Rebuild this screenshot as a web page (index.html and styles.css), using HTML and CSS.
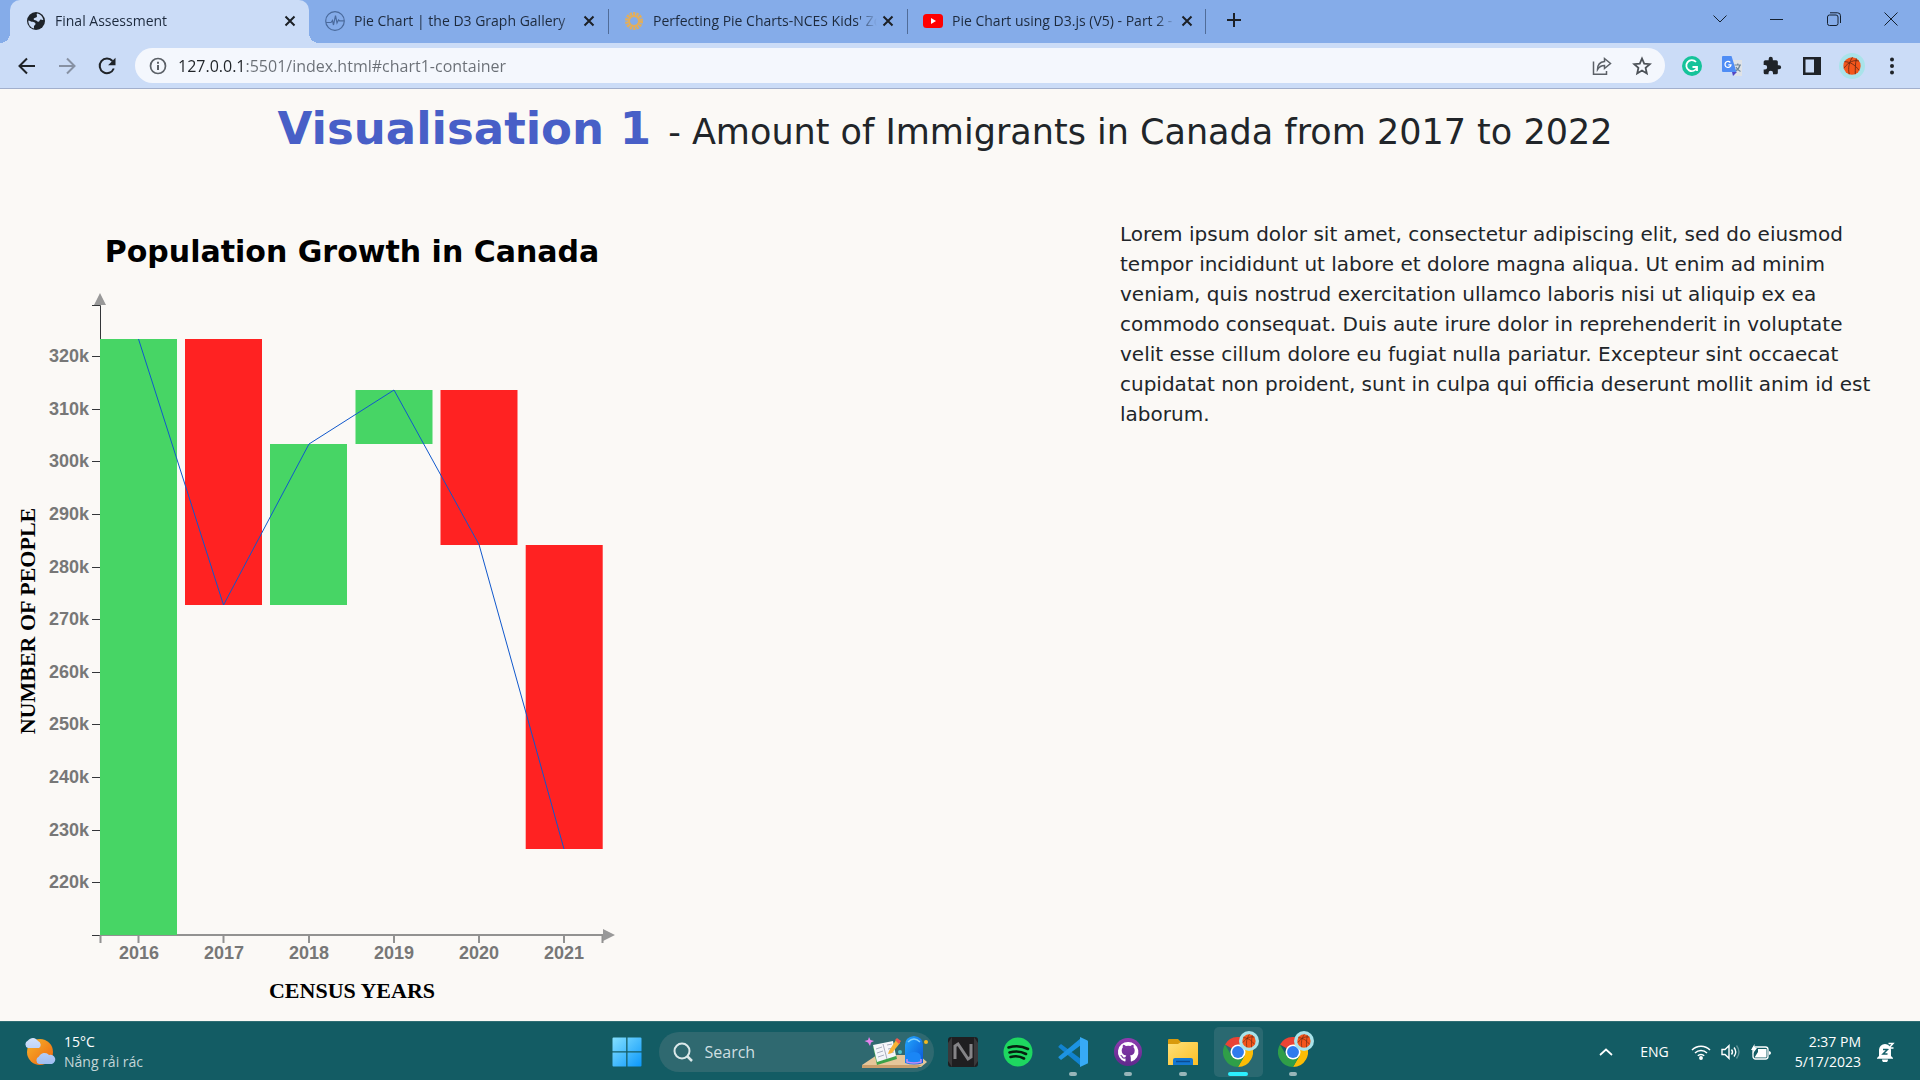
FILE: index.html
```
<!DOCTYPE html>
<html lang="en">
<head>
<meta charset="utf-8">
<title>Final Assessment</title>
<link rel="stylesheet" href="styles.css">
</head>
<body>
<svg class="defs" aria-hidden="true">
  <defs>
    <linearGradient id="sun" x1="0" y1="0" x2="1" y2="1"><stop offset="0" stop-color="#f5b52c"/><stop offset="1" stop-color="#f0640f"/></linearGradient>
    <linearGradient id="cloud" x1="0" y1="0" x2="0" y2="1"><stop offset="0" stop-color="#d3e2fb"/><stop offset="1" stop-color="#9fbdf2"/></linearGradient>
    <linearGradient id="win" x1="0" y1="0" x2="1" y2="1"><stop offset="0" stop-color="#84e0ff"/><stop offset="1" stop-color="#0b98fb"/></linearGradient>
    <linearGradient id="folder" x1="0" y1="0" x2="1" y2="1"><stop offset="0" stop-color="#ffe07a"/><stop offset="1" stop-color="#fdbf24"/></linearGradient>
    <linearGradient id="github" x1="0" y1="0" x2="0" y2="1"><stop offset="0" stop-color="#8f3bb0"/><stop offset="1" stop-color="#5f2a8c"/></linearGradient>
    <linearGradient id="bag" x1="0" y1="0" x2="1" y2="1"><stop offset="0" stop-color="#22a8ff"/><stop offset="1" stop-color="#0b55d8"/></linearGradient>
    <symbol id="close" viewBox="0 0 12 12"><path d="M1.5 1.5l9 9M10.5 1.5l-9 9" fill="none" stroke="#1c2026" stroke-width="2"/></symbol>
    <symbol id="ball" viewBox="0 0 24 24">
      <circle cx="12" cy="12" r="12" fill="#a9e3ea"/>
      <circle cx="12" cy="12" r="8" fill="#f4561b"/>
      <path d="M5 8c5 0 10 3 13.500 8M4.500 14C9 8 14 6 18.500 7.500M12.500 4c-3 4-4.500 10-3 15.500M16 5c-1 5-1 10-1 14.500" fill="none" stroke="#6b2a14" stroke-width=".8"/>
    </symbol>
    <symbol id="chrome" viewBox="0 0 48 48">
      <path d="M24 24L3.200 12A24 24 0 0 1 44.800 12z" fill="#ea4335"/>
      <path d="M24 12h20.800A24 24 0 0 1 24 48L34.400 30z" fill="#fbbc05"/>
      <path d="M3.200 12A24 24 0 0 0 24 48l10.400-18-10.400 4-10.400-4z" fill="#2f9e48"/>
      <circle cx="24" cy="24" r="12" fill="#fff"/>
      <circle cx="24" cy="24" r="9.500" fill="#2f7bee"/>
    </symbol>
  </defs>
</svg>

<header class="browser">
  <div class="tabstrip">
    <nav class="tabs" aria-label="Tabs">
      <div class="tab tab-active">
        <svg class="tab-icon" viewBox="0 0 20 20"><circle cx="10" cy="10" r="9" fill="#1e2329"/><path d="M11 2.500c3.500.5 6 3.500 6.300 6.500-1 .5-2-.8-3-.3s-.6 2-2 2-1.500-1.200-3-1.400S7 8 8.200 7.300 11 6.800 11 5.300s-.8-1.600 0-2.800zM2.300 9.500c1.500 0 2.200 1.200 3.500 1.300s3.500.3 3.700 1.800-1.200 1.600-1.500 2.700.4 1.600-.3 2.200C4.500 16.500 2.300 13.500 2.300 9.500z" fill="#cbdcf7"/></svg>
        <a class="tab-title" href="#chart1-container">Final Assessment</a>
        <button class="tab-close" aria-label="Close tab"><svg width="12" height="12"><use href="#close"/></svg></button>
      </div>
      <div class="tab">
        <svg class="tab-icon" viewBox="0 0 20 20" fill="none" stroke="#4a6a9c" stroke-width="1.200"><circle cx="10" cy="10" r="9.300"/><path d="M1 11.500h5l1.500-2 1 4.500 2-9.500 1.500 7.500 1.500-3 1 .8H19"/></svg>
        <a class="tab-title" href="#graph-gallery">Pie Chart | the D3 Graph Gallery</a>
        <button class="tab-close" aria-label="Close tab"><svg width="12" height="12"><use href="#close"/></svg></button>
      </div>
      <div class="tab">
        <svg class="tab-icon" viewBox="0 0 20 20"><circle cx="10" cy="10" r="6.500" fill="none" stroke="#e2ae5c" stroke-width="5" stroke-dasharray="2 .9"/><circle cx="10" cy="10" r="5" fill="none" stroke="#e2ae5c" stroke-width="2"/></svg>
        <a class="tab-title" href="#nces">Perfecting Pie Charts-NCES Kids' Zone</a>
        <button class="tab-close" aria-label="Close tab"><svg width="12" height="12"><use href="#close"/></svg></button>
      </div>
      <div class="tab">
        <svg class="tab-icon" viewBox="0 0 20 20"><rect y="3" width="20" height="14" rx="3.500" fill="#f00"/><path d="M8 7l5 3-5 3z" fill="#fff"/></svg>
        <a class="tab-title" href="#video">Pie Chart using D3.js (V5) - Part 2 - YouTube</a>
        <button class="tab-close" aria-label="Close tab"><svg width="12" height="12"><use href="#close"/></svg></button>
      </div>
      <button class="new-tab" aria-label="New tab"><svg width="16" height="16" viewBox="0 0 16 16"><path d="M8 1v14M1 8h14" stroke="#1c2026" stroke-width="2"/></svg></button>
    </nav>
    <div class="window-controls">
      <button aria-label="Search tabs"><svg width="14" height="14" viewBox="0 0 14 14"><path d="M.5 3.500L7 10l6.500-6.500"/></svg></button>
      <button aria-label="Minimise"><svg width="14" height="14" viewBox="0 0 14 14"><path d="M0 7.500h13"/></svg></button>
      <button aria-label="Restore"><svg width="14" height="14" viewBox="0 0 14 14"><rect x=".5" y="3" width="10.500" height="10.500" rx="2"/><path d="M3 .8h7.500a3 3 0 0 1 3 3V11"/></svg></button>
      <button aria-label="Close"><svg width="14" height="14" viewBox="0 0 14 14"><path d="M.5.5l13 13M13.500.5l-13 13"/></svg></button>
    </div>
  </div>
  <div class="toolbar">
    <button class="tool" aria-label="Back"><svg width="18" height="18" viewBox="0 0 18 18" fill="none" stroke="#1f2328" stroke-width="2"><path d="M17 9H2M9 1.500L1.500 9 9 16.500"/></svg></button>
    <button class="tool" aria-label="Forward"><svg width="18" height="18" viewBox="0 0 18 18" fill="none" stroke="#8791a3" stroke-width="2"><path d="M1 9h15M9 1.500L16.500 9 9 16.500"/></svg></button>
    <button class="tool" aria-label="Reload"><svg width="18" height="18" viewBox="0 0 18 18"><path d="M15.800 11.500A7.300 7.300 0 1 1 14.500 4" fill="none" stroke="#1f2328" stroke-width="2"/><path d="M17.500.8v7.400h-7.400z" fill="#1f2328"/></svg></button>
    <form class="omnibox">
      <svg width="18" height="18" viewBox="0 0 18 18"><circle cx="9" cy="9" r="7.500" fill="none" stroke="#5b6067" stroke-width="1.700"/><path d="M9 8v5M9 4.700v2" stroke="#5b6067" stroke-width="2"/></svg>
      <input class="address" type="text" aria-label="Address" value="127.0.0.1:5501/index.html#chart1-container">
      <button class="tool" type="button" aria-label="Share"><svg width="20" height="20" viewBox="0 0 20 20" fill="none" stroke="#5b6067" stroke-width="1.500"><path d="M1.500 5.500v12.700h13V15"/><path d="M12.500 2.500l6 5-6 5v-3C9 9.500 7 11 5.500 13.500 5.500 9 8 6 12.500 5.500z"/></svg></button>
      <button class="tool" type="button" aria-label="Bookmark"><svg width="20" height="20" viewBox="0 0 20 20"><path d="M10 2.500l2.200 5.200 5.600.5-4.200 3.700 1.200 5.500L10 14.500l-4.800 2.900 1.200-5.500-4.200-3.700 5.600-.5z" fill="none" stroke="#4c5157" stroke-width="1.800"/></svg></button>
    </form>
    <button class="tool" aria-label="Grammar checker"><svg width="20" height="20" viewBox="0 0 20 20"><circle cx="10" cy="10" r="10" fill="#15c39a"/><path d="M14 6A5.500 5.500 0 1 0 15 11.500M10.500 11H15v4" fill="none" stroke="#fff" stroke-width="1.800"/></svg></button>
    <button class="tool" aria-label="Translate"><svg width="20" height="20" viewBox="0 0 20 20"><path d="M8 4h12v16H13z" fill="#dfe2e6"/><path d="M12.500 9h6.500M15.800 7.500V9M18 9c-.8 3-2.500 5-4.500 6M14 11c1 2 2.500 3.500 4.500 4.500" fill="none" stroke="#6e8799" stroke-width="1.200"/><path d="M10 16h5l-4 4z" fill="#5347c4"/><path d="M1 0h8.500l5 16H1a1 1 0 0 1-1-1V1a1 1 0 0 1 1-1z" fill="#4f8df5"/><path d="M8.300 6.500a3 3 0 1 0 .7 2.300H6.300" fill="none" stroke="#fff" stroke-width="1.300"/></svg></button>
    <button class="tool" aria-label="Extensions"><svg width="20" height="20" viewBox="0 0 24 24"><path d="M20.500 11H19V7a2 2 0 0 0-2-2h-4V3.500a2.500 2.500 0 0 0-5 0V5H4a2 2 0 0 0-2 2v3.800h1.500a2.700 2.700 0 0 1 0 5.400H2V20a2 2 0 0 0 2 2h3.800v-1.500a2.700 2.700 0 0 1 5.400 0V22H17a2 2 0 0 0 2-2v-4h1.500a2.500 2.500 0 0 0 0-5z" fill="#1f2328"/></svg></button>
    <button class="tool" aria-label="Side panel"><svg width="18" height="18" viewBox="0 0 18 18"><path d="M0 0h18v18H0zM2.500 2.500v13h8.500v-13z" fill="#1f2328" fill-rule="evenodd"/></svg></button>
    <button class="tool" aria-label="Profile"><svg width="26" height="26"><use href="#ball"/></svg></button>
    <button class="tool" aria-label="Menu"><svg width="4" height="18" viewBox="0 0 4 18" fill="#1f2328"><circle cx="2" cy="2.500" r="2"/><circle cx="2" cy="9" r="2"/><circle cx="2" cy="15.500" r="2"/></svg></button>
  </div>
</header>

<main class="page">
  <h1 class="heading"><strong>Visualisation 1</strong> - Amount of Immigrants in Canada from 2017 to 2022</h1>
  <section class="content" id="chart1-container">
    <svg class="chart" width="640" height="790" viewBox="0 0 640 790" role="img" aria-label="Population Growth in Canada">
      <text class="chart-title" x="352" y="43">Population Growth in Canada</text>
      <g class="axis-y">
        <path d="M92 86.500h8.500v630H92M92 137.500h8M92 190.500h8M92 242.500h8M92 295.500h8M92 348.500h8M92 400.500h8M92 453.500h8M92 505.500h8M92 558.500h8M92 611.500h8M92 663.500h8"/>
        <text x="89" y="143">320k</text><text x="89" y="196">310k</text><text x="89" y="248">300k</text><text x="89" y="301">290k</text><text x="89" y="354">280k</text><text x="89" y="406">270k</text><text x="89" y="459">260k</text><text x="89" y="511">250k</text><text x="89" y="564">240k</text><text x="89" y="617">230k</text><text x="89" y="669">220k</text>
      </g>
      <g class="axis-x">
        <path d="M138.500 716v8M223.500 716v8M309 716v8M394 716v8M479 716v8M564 716v8M100.500 716v8M602.500 716v8M100 716h503"/>
        <text x="139" y="740">2016</text><text x="224" y="740">2017</text><text x="309" y="740">2018</text><text x="394" y="740">2019</text><text x="479" y="740">2020</text><text x="564" y="740">2021</text>
      </g>
      <path class="arrow" d="M94 86l6-12 6 12zM603 710l12 6-12 6z"/>
      <rect class="up" x="100" y="120" width="77" height="596"/>
      <rect class="down" x="185" y="120" width="77" height="266"/>
      <rect class="up" x="270" y="225" width="77" height="161"/>
      <rect class="up" x="355.500" y="171" width="77" height="54"/>
      <rect class="down" x="440.500" y="171" width="77" height="155"/>
      <rect class="down" x="525.700" y="326" width="77" height="304"/>
      <polyline class="trend" points="138.500,120 223.500,386 309,225 394,171 479,325.500 564,630"/>
      <text class="axis-name" x="352" y="779">CENSUS YEARS</text>
      <text class="axis-name" transform="translate(35 402) rotate(-90)">NUMBER OF PEOPLE</text>
    </svg>
    <p class="description">Lorem ipsum dolor sit amet, consectetur adipiscing elit, sed do eiusmod tempor incididunt ut labore et dolore magna aliqua. Ut enim ad minim veniam, quis nostrud exercitation ullamco laboris nisi ut aliquip ex ea commodo consequat. Duis aute irure dolor in reprehenderit in voluptate velit esse cillum dolore eu fugiat nulla pariatur. Excepteur sint occaecat cupidatat non proident, sunt in culpa qui officia deserunt mollit anim id est laborum.</p>
  </section>
</main>

<footer class="taskbar">
  <button class="weather">
    <svg width="32" height="30" viewBox="0 0 32 30"><circle cx="16" cy="15" r="13" fill="url(#sun)"/><path d="M4 11a4 4 0 0 1 0-7.500A6 6 0 0 1 14 4a4 4 0 0 1 1 7zM15 27a4 4 0 0 1 0-7.500 6 6 0 0 1 10-1.500 4.500 4.500 0 0 1 3 9z" fill="url(#cloud)"/></svg>
    <span class="weather-text"><span>15°C</span><span class="weather-note">Nắng rải rác</span></span>
  </button>
  <div class="apps">
    <button class="app" aria-label="Start"><svg width="30" height="30" viewBox="0 0 30 30" fill="url(#win)"><path d="M1.500.5H14.200V14.200H.5V1.500a1 1 0 0 1 1-1zM15.500.5h13a1 1 0 0 1 1 1v12.700h-14zM.5 15.500h13.700v14H1.500a1 1 0 0 1-1-1zM15.500 15.500h14v13a1 1 0 0 1-1 1h-13z"/></svg></button>
    <form class="search">
      <svg width="20" height="20" viewBox="0 0 20 20" fill="none" stroke="#dbe8e9" stroke-width="2"><circle cx="9" cy="9" r="7.500"/><path d="M14 14l5 5" stroke-width="2.500"/></svg>
      <input type="search" aria-label="Search" placeholder="Search">
      <svg class="search-art" width="66" height="34" viewBox="0 0 66 34">
        <path d="M0 30l15-10h42l8 7-6 5H0z" fill="#e5c69a"/><path d="M0 30h60l-5 3H0z" fill="#c99e6b"/>
        <path d="M7 2l1.500 3L12 6l-3 1.500L8 11 6 7.500 2.500 6 6 5z" fill="#e683ee"/>
        <path d="M11 12l20-5 4 17-20 6z" fill="#3ba24a"/><path d="M11 10l20-4 3 15-19 6z" fill="#f4f5fa"/><path d="M21 9l4 15M14 14l6-2M15 18l6-2M16 22l6-2M25 10l5-1M26 14l5-1M27 18l5-1" stroke="#a9aec0" stroke-width="1"/>
        <path d="M27 16l7-11 4 3-8 10-4 1z" fill="#f7b235"/><path d="M33 5l2-2 4 3-2 3z" fill="#ee5b4e"/>
        <circle cx="38" cy="17" r="2" fill="#4fc3c8"/><circle cx="64" cy="7" r="2" fill="#f5b81f"/>
        <path d="M43 28V10q0-8 9-9 9 1 9 9v18q-9 3-18 0z" fill="url(#bag)"/><path d="M46 7q6-6 12 0" fill="none" stroke="#7fd0ff" stroke-width="1.500"/><path d="M45 28v-5q0-6 7-6t7 6v5z" fill="#1a86f6"/><path d="M45 24v3q7 2 14 0v-3" fill="none" stroke="#c58cf5" stroke-width="1.500"/>
      </svg>
    </form>
    <button class="app" aria-label="Notes"><svg width="30" height="30" viewBox="0 0 30 30"><rect width="30" height="30" rx="3" fill="#1f1e20"/><path d="M0 6l4-6v30l-4-6zM30 6l-4-6v30l4-6z" fill="#3a393b"/><path d="M7 22V9l3-2 10 15 3-2V7" fill="none" stroke="#858487" stroke-width="3"/></svg></button>
    <button class="app" aria-label="Music"><svg width="30" height="30" viewBox="0 0 30 30"><circle cx="15" cy="15" r="14.500" fill="#1ed760"/><path d="M5.500 10.500c7-2 14-1.300 19.500 1.500M6.500 15.500c6-1.700 12-1 16.500 1.500M7.500 20c5-1.300 9.500-.8 13.500 1.500" fill="none" stroke="#06200f" stroke-width="2.600" stroke-linecap="round"/></svg></button>
    <button class="app app-open" aria-label="Code editor"><svg width="30" height="30" viewBox="0 0 30 30"><path d="M3 7l20 15v7L.8 10.500a1 1 0 0 1 0-1.500z" fill="#1283d0"/><path d="M3 23L23 8V1L.8 19.500a1 1 0 0 0 0 1.500z" fill="#1d93e2"/><path d="M22 0l7 3.200a1.500 1.500 0 0 1 1 1.400v20.800a1.500 1.500 0 0 1-1 1.400L22 30z" fill="#37aaf6"/></svg></button>
    <button class="app app-open" aria-label="GitHub Desktop"><svg width="30" height="30" viewBox="0 0 30 30"><circle cx="15" cy="15" r="14" fill="url(#github)"/><path d="M15 5a10 10 0 0 0-3.200 19.500c.5.100.7-.2.700-.5v-2.400c-3 .5-3.600-1-4-2-.2-.5-.7-1-1.200-1.400 1.600-.5 2.100 1.200 2.700 1.700.8.700 1.800.6 2.600.2.100-.8.400-1.300.8-1.500-3.200-.5-4.700-2-4.700-5 0-1.200.4-2.200 1.100-3-.2-1-.1-2.100.2-2.800 1 0 2 .5 2.900 1.200a9 9 0 0 1 4.600 0c.9-.7 1.900-1.200 2.900-1.200.3.700.4 1.800.2 2.800.7.800 1.100 1.800 1.100 3 0 3-1.500 4.500-4.700 5 .5.400.8 1.200.8 2.300V24c0 .3.200.6.700.5A10 10 0 0 0 15 5z" fill="#fff"/></svg></button>
    <button class="app app-open" aria-label="File Explorer"><svg width="30" height="30" viewBox="0 0 30 30"><path d="M0 3a1 1 0 0 1 1-1h9l3 3-3 4H0z" fill="#d99a0c"/><path d="M0 7h10l3-2h16a1 1 0 0 1 1 1v22H0z" fill="url(#folder)"/><path d="M5 28v-5a2 2 0 0 1 2-2h16a2 2 0 0 1 2 2v5z" fill="#1478d2"/><path d="M8 24.500h14" stroke="#0b4c91" stroke-width="1.500"/></svg></button>
    <button class="app app-open app-current" aria-label="Chrome"><svg width="30" height="30"><use href="#chrome"/></svg><svg class="badge" width="20" height="20"><use href="#ball"/></svg></button>
    <button class="app app-open" aria-label="Chrome, second profile"><svg width="30" height="30"><use href="#chrome"/></svg><svg class="badge" width="20" height="20"><use href="#ball"/></svg></button>
  </div>
  <div class="tray">
    <button aria-label="Show hidden icons"><svg width="14" height="8" viewBox="0 0 14 8"><path d="M1 7l6-5.500L13 7" fill="none" stroke="#fff" stroke-width="1.700"/></svg></button>
    <button class="language">ENG</button>
    <button class="status" aria-label="Network, sound and battery">
      <svg width="20" height="16" viewBox="0 0 20 16" fill="none" stroke="#fff" stroke-width="1.500"><path d="M1 6a12.500 12.500 0 0 1 18 0M4 9a8.500 8.500 0 0 1 12 0M6.800 11.800a4.500 4.500 0 0 1 6.400 0"/><circle cx="10" cy="14" r="1.200" fill="#fff"/></svg>
      <svg width="20" height="16" viewBox="0 0 20 16" fill="none" stroke="#fff" stroke-width="1.400"><path d="M1 5.500h3L8 1.700v12.600L4 10.500H1z"/><path d="M10.500 5.500q2 2.500 0 5M13 3.500q3.500 4.500 0 9"/><path d="M15.500 1.500q5 6.500 0 13" stroke="#5d9297"/></svg>
      <svg width="20" height="16" viewBox="0 0 20 16"><rect x="2" y="3" width="15" height="12" rx="2.500" fill="none" stroke="#fff" stroke-width="1.300"/><path d="M7 5h8.500v8.500h-12L7 8z" fill="#fff"/><path d="M18 7q2 .5 2 2t-2 2z" fill="#fff"/><path d="M3.500 0L0 6h2.500L1.500 10 6 4H3.500z" fill="#fff"/></svg>
    </button>
    <button class="clock"><span>2:37 PM</span><span>5/17/2023</span></button>
    <button aria-label="Notifications"><svg width="18" height="20" viewBox="0 0 18 20"><path d="M2 14V8a6 6 0 0 1 12 0v6l2 2v.800H0V16zM5 17.500h6a3 3 0 0 1-6 0z" fill="#fff"/><path d="M6 7.500h4.500L6 12h4.500" fill="none" stroke="#14606a" stroke-width="1.500"/><path d="M11.500 1.500H16L12 6h4.500" fill="none" stroke="#fff" stroke-width="1.500"/></svg></button>
  </div>
</footer>
</body>
</html>
```
FILE: styles.css
```
* {
  box-sizing: border-box;
}

body {
  margin: 0;
  min-height: 100vh;
  display: flex;
  flex-direction: column;
  background: #fbf9f6;
  color: #212529;
  font-family: "Open Sans", "Noto Sans", sans-serif;
}

button {
  display: flex;
  align-items: center;
  justify-content: center;
  margin: 0;
  padding: 0;
  border: 0;
  background: none;
  color: inherit;
  font: inherit;
}

svg {
  flex: none;
}

.defs {
  position: absolute;
  width: 0;
  height: 0;
}

/* Browser frame */

.browser {
  border-bottom: 1px solid #a2afcc;
  background: #cbdcf7;
}

.tabstrip {
  display: flex;
  justify-content: space-between;
  height: 43px;
  background: #85ace9;
}

.tabs {
  display: flex;
  flex: 1;
  min-width: 0;
  padding-left: 10px;
}

.tab {
  position: relative;
  display: flex;
  align-items: center;
  flex: 0 1 299px;
  min-width: 0;
  padding: 0 8px 2px 16px;
}

.tab + .tab:not(:nth-child(2))::before,
.tab:nth-child(4)::after {
  content: "";
  position: absolute;
  top: 9px;
  left: 0;
  width: 1px;
  height: 25px;
  background: #506c98;
}

.tab:nth-child(4)::after {
  left: auto;
  right: 0;
}

.tab-active {
  border-radius: 10px 10px 0 0;
  background: #cbdcf7;
}

.tab-active::before,
.tab-active::after {
  content: "";
  position: absolute;
  bottom: 0;
  width: 10px;
  height: 10px;
}

.tab-active::before {
  right: 100%;
  background: radial-gradient(circle at 0 0, #85ace9 10px, #cbdcf7 10px);
}

.tab-active::after {
  left: 100%;
  background: radial-gradient(circle at 100% 0, #85ace9 10px, #cbdcf7 10px);
}

.tab-icon {
  width: 20px;
  height: 20px;
}

.tab-title {
  flex: 1;
  margin-left: 9px;
  overflow: hidden;
  color: #1d2a3d;
  font-size: 14px;
  line-height: 20px;
  white-space: nowrap;
  text-decoration: none;
  mask-image: linear-gradient(to left, transparent, #000 20px);
}

.tab-close {
  width: 22px;
  height: 24px;
}

.new-tab {
  width: 40px;
  height: 40px;
  margin-left: 8px;
}

.window-controls {
  display: flex;
  padding-right: 1px;
}

.window-controls button {
  width: 57px;
  height: 37px;
}

.window-controls svg {
  fill: none;
  stroke: #14202f;
  stroke-width: 1;
}

.toolbar {
  display: flex;
  align-items: center;
  height: 45px;
  padding: 0 8px 0 7px;
}

.tool {
  width: 40px;
  height: 35px;
}

.omnibox {
  display: flex;
  align-items: center;
  flex: 1;
  height: 35px;
  margin: 0 7px 0 8px;
  padding: 0 3px 0 14px;
  border-radius: 18px;
  background: #f4f7fd;
}

.address {
  flex: 1;
  min-width: 0;
  padding: 0;
  margin-left: 11px;
  border: 0;
  outline: 0;
  background: linear-gradient(to right, #1f2328 68px, #6a6f76 68px) text;
  color: transparent;
  font: 16px/24px "Open Sans", sans-serif;
}

/* Page */

.page {
  flex: 1;
  padding: 13px 0 12px;
  font-family: "DejaVu Sans", Verdana, sans-serif;
}

.heading {
  margin: 0 30px 60px 0;
  font-size: 35px;
  font-weight: 400;
  line-height: 53px;
  text-align: center;
}

.heading strong {
  margin-right: 6px;
  color: #485fc7;
  font-size: 45px;
  font-weight: 700;
}

.content {
  display: grid;
  grid-template-columns: 7fr 5fr;
}

.description {
  margin: 0;
  padding-right: 30px;
  font-size: 20px;
  line-height: 30px;
}

/* Chart */

.chart {
  display: block;
  max-width: 100%;
}

.chart-title {
  fill: #000;
  font-size: 30px;
  font-weight: 700;
  text-anchor: middle;
}

.axis-x text,
.axis-y text {
  fill: #777;
  font: 700 18px "Liberation Sans", Arial, sans-serif;
}

.axis-x text {
  text-anchor: middle;
}

.axis-y text {
  text-anchor: end;
}

.axis-y path {
  fill: none;
  stroke: #333639;
}

.axis-x path {
  fill: none;
  stroke: #929291;
  stroke-width: 2;
}

.arrow {
  fill: #999;
}

.up {
  fill: #47d565;
}

.down {
  fill: #ff2222;
}

.trend {
  fill: none;
  stroke: #1058cc;
  stroke-width: 1;
}

.axis-name {
  fill: #000;
  font: 700 22px "Liberation Serif", "Times New Roman", serif;
  text-anchor: middle;
}

/* Taskbar */

.taskbar {
  display: grid;
  grid-template-columns: 1fr auto 1fr;
  align-items: center;
  height: 60px;
  border-top: 1px solid #2f6d74;
  background: #135c64;
  color: #fff;
  font-size: 14px;
  line-height: 20px;
}

.weather {
  justify-self: start;
  gap: 8px;
  padding-left: 24px;
  text-align: left;
}

.weather-text,
.clock {
  display: flex;
  flex-direction: column;
}

.weather-note {
  color: #c3d6d8;
}

.apps {
  display: flex;
  align-items: center;
}

.app {
  position: relative;
  width: 55px;
  height: 50px;
}

.app-open::after {
  content: "";
  position: absolute;
  bottom: 1px;
  left: 50%;
  width: 8px;
  height: 4px;
  border-radius: 2px;
  background: #97b5b9;
  transform: translateX(-50%);
}

.app-current {
  width: 49px;
  margin: 0 3px;
  border-radius: 5px;
  background: #2a6971;
}

.app-current::after {
  width: 20px;
  background: #2cf0ff;
}

.badge {
  position: absolute;
  top: 4px;
  left: calc(50% + 1px);
}

.search {
  display: flex;
  align-items: center;
  width: 275px;
  height: 40px;
  margin: 0 2px 0 4px;
  padding: 0 6px 0 14px;
  border-radius: 20px;
  background: #2f6970;
}

.search input {
  flex: 1;
  min-width: 0;
  margin-left: 12px;
  padding: 0;
  border: 0;
  outline: 0;
  background: none;
  color: #fff;
  font: 16px/24px "Open Sans", sans-serif;
}

.search input::placeholder {
  color: #d0dfe1;
}

.tray {
  display: flex;
  align-items: center;
  justify-self: end;
  padding-right: 25px;
}

.language {
  margin: 0 22px 0 27px;
}

.status {
  gap: 10px;
}

.clock {
  align-items: flex-end;
  margin: 0 16px 0 24px;
}
```
